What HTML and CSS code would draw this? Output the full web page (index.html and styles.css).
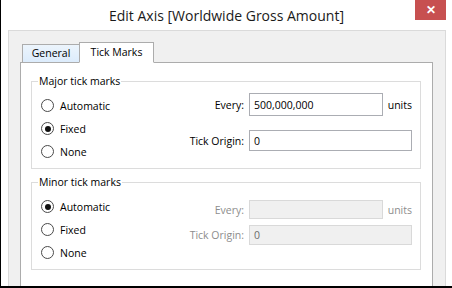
FILE: index.html
```html
<!DOCTYPE html>
<html lang="en">
<head>
  <meta charset="UTF-8">
  <title>Edit Axis</title>
  <link rel="stylesheet" href="styles.css">
</head>
<body>
  <div class="window">

    <div class="titlebar">
      <span class="title">Edit Axis [Worldwide Gross Amount]</span>
      <span class="close">&#x2715;</span>
    </div>

    <div class="client">
      <div class="tabs">
        <div class="tab">General</div>
        <div class="tab active">Tick Marks</div>
      </div>

      <div class="panel">
        <!-- Major tick marks -->
        <fieldset class="group major">
          <legend>Major tick marks</legend>
          <div class="group-body">
            <div class="radios">
              <div class="radio"><span class="dot"></span>Automatic</div>
              <div class="radio"><span class="dot checked"></span>Fixed</div>
              <div class="radio"><span class="dot"></span>None</div>
            </div>
            <div class="fields">
              <span class="field-label">Every:</span>
              <span class="input">500,000,000</span>
              <span class="units">units</span>
              <span class="field-label">Tick Origin:</span>
              <span class="input wide">0</span>
            </div>
          </div>
        </fieldset>

        <!-- Minor tick marks -->
        <fieldset class="group minor">
          <legend>Minor tick marks</legend>
          <div class="group-body">
            <div class="radios">
              <div class="radio"><span class="dot checked"></span>Automatic</div>
              <div class="radio"><span class="dot"></span>Fixed</div>
              <div class="radio"><span class="dot"></span>None</div>
            </div>
            <div class="fields disabled">
              <span class="field-label">Every:</span>
              <span class="input"></span>
              <span class="units">units</span>
              <span class="field-label">Tick Origin:</span>
              <span class="input wide">0</span>
            </div>
          </div>
        </fieldset>
      </div>
    </div>

  </div>
</body>
</html>
```

FILE: styles.css
```css
/* General */
* {
  box-sizing: border-box;
}

body {
  margin: 0;
  background: #fff;
  font-family: 'Open Sans', sans-serif;
  font-size: 10.5px;
  color: #000;
}

.window {
  width: 452px;
  height: 288px;
  border-left: 1px solid #000;
  border-bottom: 2px solid #000;
  display: flex;
  flex-direction: column;
}

/* Title bar */
.titlebar {
  height: 30px;
  display: grid;
  grid-template-columns: 1fr auto 1fr;
  align-items: start;
}

.title {
  grid-column: 2;
  font-size: 14px;
  line-height: 18px;
  margin-top: 7px;
  color: #1a1a1a;
}

.close {
  grid-column: 3;
  justify-self: end;
  width: 31px;
  height: 20px;
  margin-right: 6px;
  background: #c75050;
  color: #fff;
  font-size: 12px;
  font-weight: bold;
  line-height: 20px;
  text-align: center;
}

/* Client area */
.client {
  flex: 1;
  margin: 0 6px 0 7px;
  background: #f0f0f0;
  border: 1px solid #dadada;
  border-bottom: none;
  padding: 11px 12px 0 11px;
  display: flex;
  flex-direction: column;
}

.tabs {
  display: flex;
  align-items: flex-end;
  height: 20px;
  padding-left: 2px;
}

.tab {
  width: 58px;
  height: 19px;
  margin-bottom: -1px;
  border: 1px solid #acacac;
  background: linear-gradient(#ecf4fc, #dcecfc);
  line-height: 17px;
  text-align: center;
}

.tab.active {
  position: relative;
  width: 75px;
  height: 21px;
  margin-left: -1px;
  background: #fff;
  border-bottom-color: #fff;
  line-height: 18px;
}

.panel {
  flex: 1;
  background: #fff;
  border: 1px solid #acacac;
  border-bottom: none;
  padding: 10px 11px 0 10px;
}

/* Group boxes */
.group {
  margin: 0 0 5px;
  padding: 5px 8px 5px 9px;
  border: 1px solid #dcdcdc;
}

.group legend {
  margin-left: -3px;
  padding: 0 1px;
  line-height: 16px;
}

.group-body {
  display: flex;
  justify-content: space-between;
  align-items: flex-start;
}

.radios {
  display: flex;
  flex-direction: column;
}

.radio {
  height: 23px;
  display: flex;
  align-items: center;
  gap: 6px;
}

.dot {
  width: 13px;
  height: 13px;
  border: 1px solid #4a4a4a;
  border-radius: 50%;
  background: #fff;
  display: flex;
  align-items: center;
  justify-content: center;
}

.dot.checked::after {
  content: "";
  width: 6px;
  height: 6px;
  border-radius: 50%;
  background: #111;
}

/* Fields */
.fields {
  display: grid;
  grid-template-columns: auto 134px 26px;
  column-gap: 3px;
  align-items: center;
}

.major .fields {
  margin-top: -1px;
  grid-template-rows: 23px 21px;
  row-gap: 14px;
}

.minor .fields {
  margin-top: 5px;
  grid-template-rows: 19px 20px;
  row-gap: 6px;
}

.field-label {
  text-align: right;
  margin-right: 2px;
}

.input {
  height: 100%;
  border: 1px solid #abadb3;
  padding: 0 4px;
  display: flex;
  align-items: center;
  background: #fff;
}

.input.wide {
  grid-column: 2 / 4;
}

.units {
  text-align: right;
}

.disabled {
  color: #8d8d8d;
}

.disabled .input {
  background: #f0f0f0;
  border-color: #d9d9d9;
  color: #6d6d6d;
}
```
